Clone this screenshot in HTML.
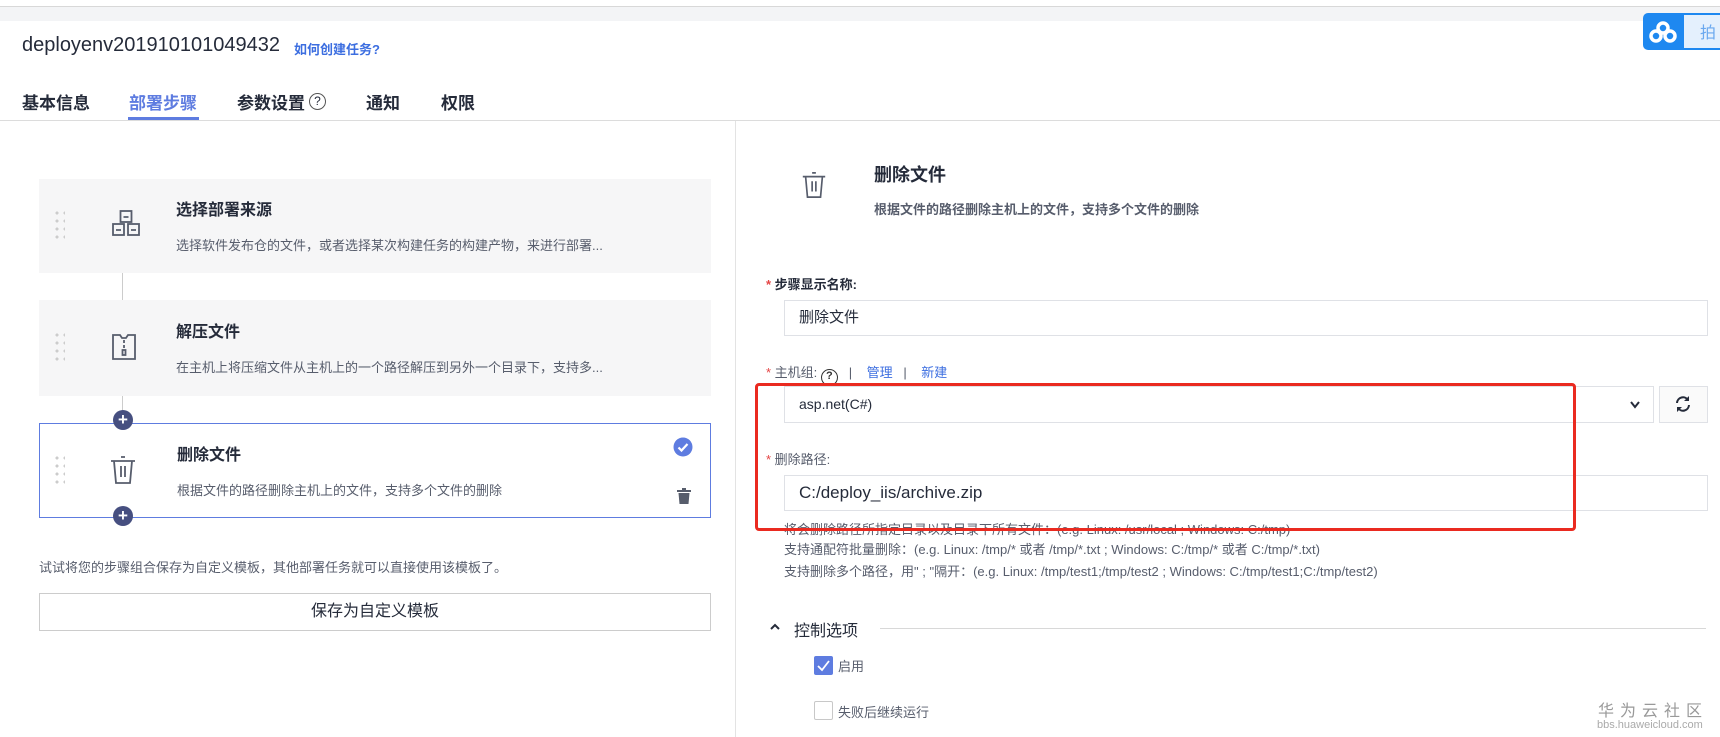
<!DOCTYPE html>
<html><head><meta charset="utf-8"><style>
*{margin:0;padding:0;box-sizing:border-box}
body{width:1720px;height:737px;overflow:hidden;background:#fff;font-family:"Liberation Sans","Noto Sans CJK SC",sans-serif;color:#252b3a;position:relative}
.a{position:absolute;white-space:nowrap}
.card{position:absolute;left:39px;width:672px;background:#f6f6f7}
.dots{position:absolute;left:14px;width:12px;height:34px;background-image:radial-gradient(circle,#ccc 1.4px,transparent 1.7px);background-size:8px 8px}
.ct{position:absolute;left:137px;font-size:16px;font-weight:bold;color:#252b3a}
.cd{position:absolute;left:137px;font-size:13px;color:#575d6c}
.plus{position:absolute;left:113px;width:20px;height:20px;border-radius:50%;background:#464f80;color:#fff;font-size:17px;line-height:19px;text-align:center;font-weight:bold;z-index:2}
.inp{position:absolute;left:784px;border:1px solid #dfe1e6;background:#fff;font-size:15px;padding-left:14px}
.star{color:#e54545;font-size:13px}
.help{font-size:13px;color:#575d6c}
</style></head><body>
<div class="a" style="left:0;top:6px;width:1720px;height:15px;background:#f3f4f6;border-top:1px solid #d8d8d8"></div>
<div class="a" style="left:1643px;top:13px;width:90px;height:37px;background:#1e88f0;border-radius:5px"></div>
<div class="a" style="left:1684px;top:15px;width:36px;height:33px;background:#e4f0fd"></div>
<svg class="a" style="left:1648px;top:20px" width="30" height="24" viewBox="0 0 30 24"><g fill="none" stroke="#fff" stroke-width="3.5"><circle cx="15" cy="8" r="5"/><circle cx="8" cy="16" r="5"/><circle cx="22" cy="16" r="5"/></g></svg>
<div class="a" style="left:1700px;top:19px;font-size:16px;color:#6aa8ef">拍</div>
<div class="a" style="left:22px;top:34px;font-size:20px;color:#252b3a">deployenv201910101049432</div>
<div class="a" style="left:294px;top:39px;font-size:13px;color:#3c6ee0;font-weight:bold">如何创建任务?</div>
<div class="a" style="left:22px;top:89px;font-size:17px;font-weight:bold">基本信息</div>
<div class="a" style="left:129px;top:89px;font-size:17px;font-weight:bold;color:#5e7ce0">部署步骤</div>
<div class="a" style="left:128px;top:117px;width:71px;height:3px;background:#5e7ce0"></div>
<div class="a" style="left:237px;top:89px;font-size:17px;font-weight:bold">参数设置</div>
<div class="a" style="left:309px;top:93px;width:17px;height:17px;border:1px solid #555;border-radius:50%;font-size:12px;text-align:center;line-height:15px">?</div>
<div class="a" style="left:366px;top:89px;font-size:17px;font-weight:bold">通知</div>
<div class="a" style="left:441px;top:89px;font-size:17px;font-weight:bold">权限</div>
<div class="a" style="left:0;top:120px;width:1720px;height:1px;background:#dcdcdc"></div>
<div class="a" style="left:735px;top:121px;width:1px;height:616px;background:#e3e3e3"></div>

<div class="a" style="left:122px;top:273px;width:1px;height:150px;background:#ccc"></div>
<div class="card" style="top:179px;height:94px"><div class="dots" style="top:30px"></div>
<svg class="a" style="left:72px;top:30px" width="30" height="30" viewBox="0 0 30 30"><g fill="none" stroke="#575d6c" stroke-width="1.8"><rect x="9.5" y="2" width="11" height="11"/><rect x="2" y="15" width="11" height="11"/><rect x="17" y="15" width="11" height="11"/></g><g stroke="#575d6c" stroke-width="1.8"><path d="M12.5 8h5M5 21h5M20 21h5"/></g></svg>
<div class="ct" style="top:17px">选择部署来源</div><div class="cd" style="top:56px">选择软件发布仓的文件，或者选择某次构建任务的构建产物，来进行部署...</div></div>
<div class="card" style="top:300px;height:96px"><div class="dots" style="top:31px"></div>
<svg class="a" style="left:70px;top:32px" width="30" height="30" viewBox="0 0 30 30"><g fill="none" stroke="#575d6c" stroke-width="1.8"><path d="M4 3h7l2 3h4l2-3h7v24H4z"/><path d="M15 8v3M15 13v3"/><rect x="13.5" y="18" width="3" height="5"/></g></svg>
<div class="ct" style="top:18px">解压文件</div><div class="cd" style="top:57px">在主机上将压缩文件从主机上的一个路径解压到另外一个目录下，支持多...</div></div>
<div class="card" style="top:423px;height:95px;background:#fff;border:1.5px solid #5e7ce0"><div class="dots" style="top:30px;left:13px"></div>
<svg class="a" style="left:68px;top:30px" width="30" height="32" viewBox="0 0 30 32"><g fill="none" stroke="#575d6c" stroke-width="1.8"><path d="M3 7h24M13 3h4M6 7l2 22h14l2-22M13 12v11M17 12v11"/></g></svg>
<div class="ct" style="top:17px">删除文件</div><div class="cd" style="top:56px">根据文件的路径删除主机上的文件，支持多个文件的删除</div>
<svg class="a" style="left:633px;top:13px" width="20" height="20" viewBox="0 0 20 20"><circle cx="10" cy="10" r="9.5" fill="#5e7ce0"/><path d="M5.5 10.5l3 3 6-6.5" stroke="#fff" stroke-width="2.2" fill="none"/></svg>
<svg class="a" style="left:637px;top:64px" width="14" height="16" viewBox="0 0 14 16"><rect x="0" y="2" width="14" height="2" fill="#575d6c"/><rect x="5" y="0" width="4" height="2" fill="#575d6c"/><path d="M1.5 5h11l-1 11h-9z" fill="#575d6c"/></svg>
</div>
<div class="plus" style="top:410px">+</div>
<div class="plus" style="top:506px">+</div>
<div class="a" style="left:39px;top:557px;font-size:13px;color:#575d6c">试试将您的步骤组合保存为自定义模板，其他部署任务就可以直接使用该模板了。</div>
<div class="a" style="left:39px;top:593px;width:672px;height:38px;border:1px solid #ccc;text-align:center;line-height:36px;font-size:16px;color:#252b3a">保存为自定义模板</div>

<svg class="a" style="left:800px;top:170px" width="28" height="30" viewBox="0 0 30 32"><g fill="none" stroke="#575d6c" stroke-width="1.8"><path d="M3 7h24M13 3h4M6 7l2 22h14l2-22M13 12v11M17 12v11"/></g></svg>
<div class="a" style="left:874px;top:161px;font-size:18px;font-weight:bold">删除文件</div>
<div class="a" style="left:874px;top:199px;font-size:13px;color:#575d6c;font-weight:bold">根据文件的路径删除主机上的文件，支持多个文件的删除</div>
<div class="a" style="left:766px;top:274px;font-size:13px;font-weight:bold"><span class="star">*</span> 步骤显示名称:</div>
<div class="inp" style="top:300px;width:924px;height:36px;line-height:34px">删除文件</div>
<div class="a" style="left:766px;top:362px;font-size:13px;color:#575d6c"><span class="star">*</span> 主机组: <span style="display:inline-block;width:17px;height:17px;border:1.8px solid #333;border-radius:50%;text-align:center;line-height:13px;font-size:11px;font-weight:bold;color:#333;vertical-align:-2px">?</span> &nbsp;&nbsp;|&nbsp;&nbsp;&nbsp; <span style="color:#3c6ee0">管理</span> &nbsp;&nbsp;|&nbsp;&nbsp;&nbsp; <span style="color:#3c6ee0">新建</span></div>
<div class="inp" style="top:386px;width:870px;height:37px;line-height:35px;font-size:14px">asp.net(C#)
<svg class="a" style="right:12px;top:13px" width="12" height="10" viewBox="0 0 12 10"><path d="M2 2l4 5 4-5" stroke="#252b3a" stroke-width="2" fill="none"/></svg></div>
<div class="a" style="left:1659px;top:386px;width:49px;height:37px;border:1px solid #dfe1e6;background:#fafafa"></div>
<svg class="a" style="left:1674px;top:395px" width="18" height="18" viewBox="0 0 18 18"><g fill="none" stroke="#252b3a" stroke-width="2"><path d="M3 8a6 6 0 0 1 11-3M15 10a6 6 0 0 1-11 3"/></g><path d="M15 1v5h-5z M3 17v-5h5z" fill="#252b3a"/></svg>
<div class="a" style="left:766px;top:449px;font-size:13px;color:#575d6c"><span class="star">*</span> 删除路径:</div>
<div class="inp" style="top:475px;width:924px;height:36px;line-height:34px;font-size:17px">C:/deploy_iis/archive.zip</div>
<div class="a help" style="left:784px;top:519px">将会删除路径所指定目录以及目录下所有文件：(e.g. Linux: /usr/local ; Windows: C:/tmp)</div>
<div class="a help" style="left:784px;top:539px">支持通配符批量删除：(e.g. Linux: /tmp/* 或者 /tmp/*.txt ; Windows: C:/tmp/* 或者 C:/tmp/*.txt)</div>
<div class="a help" style="left:784px;top:561px">支持删除多个路径，用" ; "隔开：(e.g. Linux: /tmp/test1;/tmp/test2 ; Windows: C:/tmp/test1;C:/tmp/test2)</div>
<div class="a" style="left:755px;top:383px;width:821px;height:148px;border:3.5px solid #ea2a20;border-radius:4px"></div>
<svg class="a" style="left:770px;top:623px" width="10" height="8" viewBox="0 0 10 8"><path d="M1 6l4-4 4 4" stroke="#252b3a" stroke-width="2" fill="none"/></svg>
<div class="a" style="left:794px;top:617px;font-size:16px">控制选项</div>
<div class="a" style="left:880px;top:628px;width:826px;height:1px;background:#d8d8d8"></div>
<div class="a" style="left:814px;top:656px;width:19px;height:19px;background:#5e7ce0;border-radius:2px"></div>
<svg class="a" style="left:815px;top:657px" width="17" height="17" viewBox="0 0 17 17"><path d="M3 9l4 4 7-9" stroke="#fff" stroke-width="1.8" fill="none"/></svg>
<div class="a" style="left:838px;top:656px;font-size:13px;color:#575d6c">启用</div>
<div class="a" style="left:814px;top:701px;width:19px;height:19px;border:1px solid #c8c8c8;border-radius:2px"></div>
<div class="a" style="left:838px;top:702px;font-size:13px;color:#575d6c">失败后继续运行</div>
<div class="a" style="left:1598px;top:697px;font-size:16px;color:#999;letter-spacing:6px">华为云社区</div>
<div class="a" style="left:1597px;top:719px;font-size:11px;color:#aaa">bbs.huaweicloud.com</div>
</body></html>
